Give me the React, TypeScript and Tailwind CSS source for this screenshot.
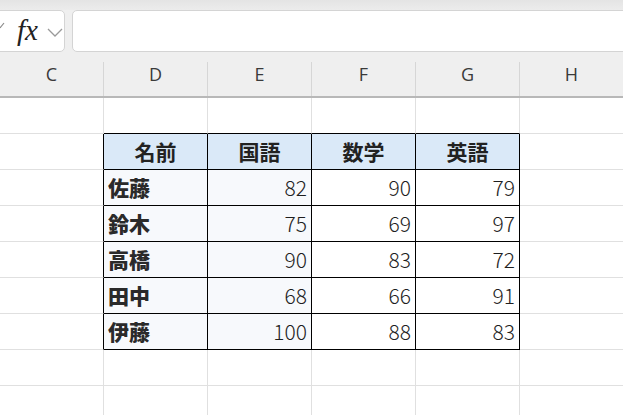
import React from "react";

const cols = ["C", "D", "E", "F", "G", "H"];
const header = ["名前", "国語", "数学", "英語"];
const data: [string, number, number, number][] = [
  ["佐藤", 82, 90, 79],
  ["鈴木", 75, 69, 97],
  ["高橋", 90, 83, 72],
  ["田中", 68, 66, 91],
  ["伊藤", 100, 88, 83],
];

const jp = { fontFamily: '"Noto Sans CJK JP", "Noto Sans", sans-serif' };

function Cell({
  children,
  className = "",
}: {
  children?: React.ReactNode;
  className?: string;
}) {
  return (
    <div
      className={`h-[36px] w-[104px] shrink-0 border-r border-b box-border flex items-center ${className}`}
    >
      {children}
    </div>
  );
}

export default function App() {
  const rows: React.ReactNode[] = [];
  rows.push(
    <div key="r1" className="flex">
      {cols.map((c, i) => (
        <Cell
          key={c}
          className={`border-r-[#e0e0e0] ${
            i >= 1 && i <= 4 ? "border-b-black" : "border-b-[#e0e0e0]"
          }`}
        />
      ))}
    </div>
  );
  rows.push(
    <div key="hdr" className="flex">
      <Cell className="border-r-black border-b-[#e0e0e0]" />
      {header.map((h) => (
        <Cell
          key={h}
          className="border-r-black border-b-black bg-[#dae9f8] justify-center text-[21px] font-bold text-[#222]"
        >
          <span style={jp}>{h}</span>
        </Cell>
      ))}
      <Cell className="border-r-[#e0e0e0] border-b-[#e0e0e0]" />
    </div>
  );
  data.forEach((r) => {
    rows.push(
      <div key={r[0]} className="flex">
        <Cell className="border-r-black border-b-[#e0e0e0]" />
        <Cell className="border-r-black border-b-black bg-[#f7f9fc] pl-[4px] text-[21px] font-black text-[#2a2a2a]">
          <span style={jp}>{r[0]}</span>
        </Cell>
        {[r[1], r[2], r[3]].map((n, i) => (
          <Cell
            key={i}
            className={`border-r-black border-b-black justify-end pr-[4px] text-[21px] font-light text-[#1e1e1e] ${
              i === 0 ? "bg-[#f7f9fc]" : "bg-white"
            }`}
          >
            <span style={jp}>{n}</span>
          </Cell>
        ))}
        <Cell className="border-r-[#e0e0e0] border-b-[#e0e0e0]" />
      </div>
    );
  });
  for (let k = 0; k < 2; k++) {
    rows.push(
      <div key={"e" + k} className="flex">
        {cols.map((c) => (
          <Cell key={c} className="border-r-[#e0e0e0] border-b-[#e0e0e0]" />
        ))}
      </div>
    );
  }

  return (
    <div className="w-[623px] h-[415px] overflow-hidden bg-white flex flex-col">
      <div className="h-[10px] shrink-0 bg-gradient-to-b from-[#e4e4e4] to-[#ececec]" />
      <div className="h-[42px] shrink-0 bg-[#efefef] flex gap-[7px]">
        <div className="w-[66px] ml-[-1px] h-full shrink-0 bg-white border border-[#d4d4d4] rounded-r-[5px] flex items-center">
          <svg width="5" height="8" viewBox="0 0 5 8" className="mb-[12px] shrink-0">
            <path d="M0 7 L4 2" stroke="#8a8a8a" strokeWidth="1.2" fill="none" />
          </svg>
          <span
            className="ml-[12px] text-[29px] italic leading-none text-[#222] mb-[2px]"
            style={{ fontFamily: '"Liberation Serif", serif' }}
          >
            fx
          </span>
          <svg width="16" height="9" viewBox="0 0 16 9" className="ml-[9px] mt-[3px] shrink-0">
            <path d="M1 1 L8 8 L15 1" stroke="#9a9a9a" strokeWidth="1.3" fill="none" />
          </svg>
        </div>
        <div className="flex-1 h-full bg-white border border-[#d4d4d4] rounded-l-[5px] mr-[-10px]" />
      </div>
      <div className="h-[46px] shrink-0 bg-[#efefef] border-b-2 border-[#b8b8b8] flex">
        {cols.map((c) => (
          <div key={c} className="w-[104px] shrink-0 h-full flex">
            <div
              className="flex-1 flex items-center justify-center text-[18px] text-[#3a3a3a] pt-[1px]"
              style={{ fontFamily: '"Open Sans", "Noto Sans", sans-serif' }}
            >
              {c}
            </div>
            <div className="w-px h-[34px] self-end bg-[#d6d6d6]" />
          </div>
        ))}
      </div>
      <div className="flex flex-col">{rows}</div>
    </div>
  );
}
